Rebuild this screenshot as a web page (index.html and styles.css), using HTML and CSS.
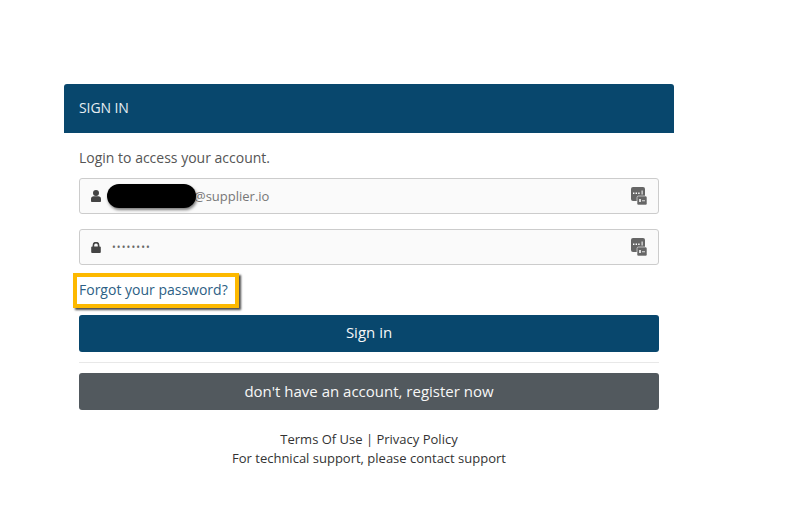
FILE: index.html
```html
<!DOCTYPE html>
<html lang="en">
<head>
    <meta charset="UTF-8">
    <meta name="viewport" content="width=device-width, initial-scale=1.0">
    <title>Sign In</title>
    <link rel="stylesheet" href="styles.css">
</head>
<body>
    <div class="card">
        <div class="card-header">SIGN IN</div>
        <div class="card-body">
            <p class="intro">Login to access your account.</p>

            <div class="field field-user">
                <svg class="field-icon" viewBox="0 0 10 12" width="10" height="12">
                    <circle cx="5" cy="3" r="3" fill="#444"/>
                    <path d="M0 11V8.8C0 7.2 1.2 6.2 2.6 6.2H7.4C8.8 6.2 10 7.2 10 8.8V11C10 11.6 9.7 12 9.2 12H.8C.3 12 0 11.6 0 11Z" fill="#444"/>
                </svg>
                <span class="redacted-wrap"><span class="redacted"></span></span>
                <span class="field-value">@supplier.io</span>
                <svg class="field-key" viewBox="0 0 16 18" width="16" height="18">
                    <rect x="0" y="0" width="14" height="14" rx="2" fill="#666"/>
                    <rect x="6" y="9" width="10" height="9" rx="1.5" fill="#666" stroke="#fafafa" stroke-width=".6"/>
                    <path d="M2 5.5h1.4v1.4H2zM4.6 5.5H6v1.4H4.6zM7.2 5.5h1.4v1.4H7.2zM10.6 3.5h1v4h-1z" fill="#fff"/>
                    <path d="M8 12h2v3H8zM11 13.2h3v1h-3z" fill="#ddd"/>
                </svg>
            </div>

            <div class="field field-pass">
                <svg class="field-icon" viewBox="0 0 10 11" width="10" height="11">
                    <path d="M2.4 5V3.2a2.6 2.6 0 0 1 5.2 0V5" fill="none" stroke="#444" stroke-width="1.6"/>
                    <rect x="0.2" y="4.6" width="9.6" height="6.4" rx="1" fill="#444"/>
                </svg>
                <span class="field-dots">••••••••</span>
                <svg class="field-key" viewBox="0 0 16 18" width="16" height="18">
                    <rect x="0" y="0" width="14" height="14" rx="2" fill="#666"/>
                    <rect x="6" y="9" width="10" height="9" rx="1.5" fill="#666" stroke="#fafafa" stroke-width=".6"/>
                    <path d="M2 5.5h1.4v1.4H2zM4.6 5.5H6v1.4H4.6zM7.2 5.5h1.4v1.4H7.2zM10.6 3.5h1v4h-1z" fill="#fff"/>
                    <path d="M8 12h2v3H8zM11 13.2h3v1h-3z" fill="#ddd"/>
                </svg>
            </div>

            <div class="forgot-row">
                <a class="forgot" href="#">Forgot your password?</a>
            </div>

            <button class="btn btn-primary">Sign in</button>
            <hr class="divider">
            <button class="btn btn-secondary">don't have an account, register now</button>

            <div class="footer-links">
                <div>Terms Of Use | Privacy Policy</div>
                <div>For technical support, please contact support</div>
            </div>
        </div>
    </div>
</body>
</html>
```

FILE: styles.css
```css
body {
    font-family: "Open Sans", sans-serif;
    margin: 0;
    padding: 84px 0 0 64px;
    background-color: #fff;
    color: #444;
}

.card {
    width: 610px;
}

.card-header {
    background-color: #08476d;
    color: #e6edf2;
    height: 49px;
    line-height: 48px;
    padding-left: 15px;
    font-size: 14px;
    letter-spacing: -0.1px;
    border-radius: 3px 3px 0 0;
}

.card-body {
    padding: 15px 15px 0;
}

.intro {
    margin: 0 0 10px;
    font-size: 14px;
    line-height: 20px;
    color: #555;
}

.field {
    display: flex;
    align-items: center;
    box-sizing: border-box;
    height: 36px;
    border: 1px solid #ccc;
    border-radius: 3px;
    background-color: #fafafa;
    padding: 0 11px;
    font-size: 13px;
    color: #777;
}

.field-user {
    margin-bottom: 15px;
}

.field-icon {
    flex: none;
}

.redacted-wrap {
    position: relative;
    z-index: 1;
    width: 89px;
    height: 24px;
    margin-left: 6px;
    margin-right: -2px;
    flex: none;
}

.redacted {
    display: block;
    height: 100%;
    border-radius: 12px;
    background-color: #000;
    box-shadow: 1px 2px 3px rgba(0, 0, 0, 0.5);
}

.field-dots {
    margin-left: 11px;
    font-size: 10px;
    letter-spacing: 1.1px;
    color: #666;
}

.field-key {
    margin-left: auto;
    flex: none;
}

.forgot-row {
    margin-top: 8px;
    height: 35px;
    margin-bottom: 7px;
}

.forgot {
    display: inline-block;
    box-sizing: border-box;
    margin-left: -6px;
    height: 35px;
    line-height: 25px;
    padding: 0 7px 0 2px;
    border: 4px solid #fdb900;
    box-shadow: 2px 2px 2px rgba(0, 0, 0, 0.7);
    font-size: 14px;
    color: #2d5f85;
    text-decoration: none;
}

.btn {
    display: block;
    width: 100%;
    height: 37px;
    padding: 0 0 3px;
    border: none;
    border-radius: 3px;
    color: #f7f7f7;
    font-family: "Open Sans", sans-serif;
    font-size: 15px;
}

.btn-primary {
    background-color: #08476d;
}

.btn-secondary {
    padding-bottom: 2px;
    background-color: #52595e;
}

.divider {
    border: none;
    border-top: 1px solid #e8e8e8;
    margin: 10px 0 10px;
}

.footer-links {
    margin-top: 20px;
    text-align: center;
    font-size: 13px;
    line-height: 19px;
    color: #333;
}
```
